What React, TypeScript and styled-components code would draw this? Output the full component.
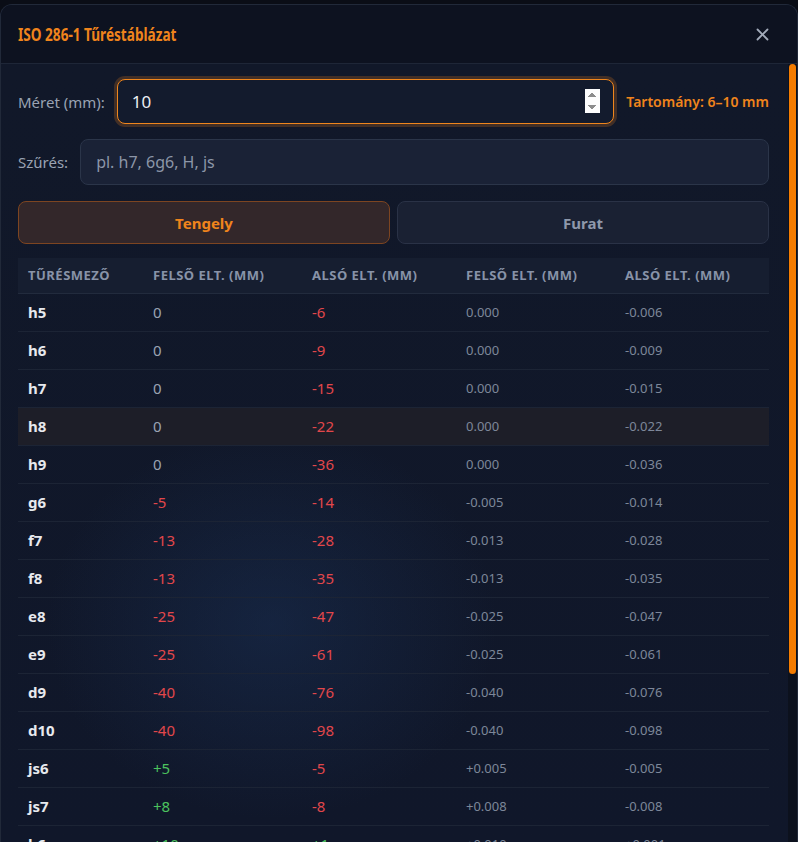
import React, { useState } from 'react';
import styled, { createGlobalStyle } from 'styled-components';

type Row = { name: string; es: number; ei: number };

const SHAFT_ROWS: Row[] = [
  { name: 'h5', es: 0, ei: -6 },
  { name: 'h6', es: 0, ei: -9 },
  { name: 'h7', es: 0, ei: -15 },
  { name: 'h8', es: 0, ei: -22 },
  { name: 'h9', es: 0, ei: -36 },
  { name: 'g6', es: -5, ei: -14 },
  { name: 'f7', es: -13, ei: -28 },
  { name: 'f8', es: -13, ei: -35 },
  { name: 'e8', es: -25, ei: -47 },
  { name: 'e9', es: -25, ei: -61 },
  { name: 'd9', es: -40, ei: -76 },
  { name: 'd10', es: -40, ei: -98 },
  { name: 'js6', es: 5, ei: -5 },
  { name: 'js7', es: 8, ei: -8 },
  { name: 'k6', es: 10, ei: 1 },
  { name: 'm6', es: 15, ei: 6 },
  { name: 'n6', es: 19, ei: 10 },
  { name: 'p6', es: 24, ei: 15 },
  { name: 'r6', es: 28, ei: 19 },
  { name: 's6', es: 32, ei: 23 },
];

const fmtUm = (v: number) => (v > 0 ? `+${v}` : `${v}`);
const fmtMm = (v: number) => {
  const s = (Math.abs(v) / 1000).toFixed(3);
  if (v > 0) return `+${s}`;
  if (v < 0) return `-${s}`;
  return s;
};
const tone = (v: number) => (v > 0 ? 'pos' : v < 0 ? 'neg' : 'zero');

const GlobalStyle = createGlobalStyle`
  html, body {
    margin: 0;
    background: #0a0d16;
    height: 100%;
  }
  body {
    font-family: "Noto Sans", "Open Sans", sans-serif;
    color: #e5e7eb;
    overflow: hidden;
  }
  * { box-sizing: border-box; }
`;

const Modal = styled.div`
  position: relative;
  margin-top: 4px;
  height: calc(100vh - 4px);
  width: 100%;
  display: flex;
  flex-direction: column;
  border: 1px solid #212939;
  border-bottom: none;
  border-radius: 12px 12px 0 0;
  background: #10172a;
  overflow: hidden;
`;

const Header = styled.div`
  flex: 0 0 59px;
  display: flex;
  align-items: center;
  justify-content: space-between;
  padding: 0 22px 0 17px;
  background: #0d1220;
  border-bottom: 1px solid #1e2637;
`;

const Title = styled.h2`
  margin: 0;
  font-family: "Noto Sans", "DejaVu Sans", sans-serif;
  font-stretch: 62.5%;
  font-weight: 700;
  font-size: 17px;
  color: #f0841c;
  transform: scaleX(0.8);
  transform-origin: left center;
`;

const CloseButton = styled.button`
  border: none;
  background: transparent;
  padding: 6px;
  display: flex;
  cursor: pointer;
  color: #a2abba;
`;

const Body = styled.div`
  flex: 1;
  overflow-y: auto;
  scrollbar-width: none;
  padding: 15px 28px 10px 17px;
  background:
    radial-gradient(ellipse 300px 260px at 34% 72%, rgba(30, 58, 102, 0.36), transparent 75%),
    linear-gradient(180deg, #111829 0%, #10172a 100%);
`;

/* scroll indicator drawn over the right edge of the body */
const ScrollTrack = styled.div`
  position: absolute;
  top: 59px;
  right: 0;
  bottom: 0;
  width: 9px;
  background: #0c111d;
  pointer-events: none;
`;

const ScrollThumb = styled.div`
  position: absolute;
  top: 0;
  right: 1px;
  width: 7px;
  height: 610px;
  border-radius: 4px;
  background: #f57c00;
`;

const FieldRow = styled.div<{ $gap?: number }>`
  display: flex;
  align-items: center;
  gap: 12px;
  margin-bottom: ${(p) => p.$gap ?? 15}px;
`;

const Label = styled.label`
  font-size: 15px;
  color: #9aa3b3;
  white-space: nowrap;
`;

const NumberInput = styled.input`
  flex: 1;
  height: 45px;
  padding: 0 13px 0 14px;
  border-radius: 8px;
  border: 1px solid #ef861d;
  box-shadow: 0 0 0 3px rgba(240, 132, 28, 0.22);
  background: #131b2d;
  color: #eceef2;
  font-family: inherit;
  font-size: 17px;
  outline: none;

  &::-webkit-inner-spin-button {
    opacity: 1;
    height: 25px;
  }
`;

const FilterInput = styled.input`
  flex: 1;
  height: 46px;
  padding: 0 15px;
  border-radius: 8px;
  border: 1px solid #2b3549;
  background: #1a2236;
  color: #e5e7eb;
  font-family: inherit;
  font-size: 16px;
  outline: none;

  &::placeholder {
    color: #8c96a8;
  }
`;

const RangeNote = styled.span`
  font-size: 14px;
  font-weight: 600;
  color: #f0841c;
  white-space: nowrap;
`;

const Tabs = styled.div`
  display: grid;
  grid-template-columns: 1fr 1fr;
  gap: 7px;
  margin-bottom: 14px;
`;

const Tab = styled.button<{ $active: boolean }>`
  height: 43px;
  border-radius: 8px;
  font-family: inherit;
  font-size: 15px;
  font-weight: 700;
  cursor: pointer;
  border: 1px solid ${(p) => (p.$active ? '#7d4521' : '#2a3246')};
  background: ${(p) => (p.$active ? '#33272a' : '#1a2133')};
  color: ${(p) => (p.$active ? '#f0841c' : '#8e98ab')};
`;

const Table = styled.table`
  width: 100%;
  border-collapse: collapse;
  table-layout: fixed;
`;

const HeadCell = styled.th<{ $w: number }>`
  width: ${(p) => p.$w}px;
  height: 35px;
  padding: 0 10px;
  text-align: left;
  font-size: 13px;
  font-weight: 700;
  letter-spacing: 0.5px;
  text-transform: uppercase;
  color: #8893a8;
  background: #161e30;
  border-bottom: 1px solid #222b3d;
  white-space: nowrap;
`;

const BodyRow = styled.tr<{ $hover?: boolean }>`
  height: 38px;
  border-bottom: 1px solid #1c2435;
  background: ${(p) => (p.$hover ? '#1d1e28' : 'transparent')};
`;

const NameCell = styled.td`
  padding: 0 10px;
  font-size: 15px;
  font-weight: 700;
  color: #e7e9ee;
`;

const UmCell = styled.td<{ $tone: string }>`
  padding: 0 10px;
  font-size: 15px;
  color: ${(p) => (p.$tone === 'neg' ? '#e2474b' : p.$tone === 'pos' ? '#4cc35e' : '#9aa3b3')};
`;

const MmCell = styled.td`
  padding: 0 10px;
  font-size: 13px;
  color: #7d8799;
`;

const CloseIcon = () => (
  <svg width="13" height="13" viewBox="0 0 13 13" fill="none" stroke="currentColor" strokeWidth="1.8" strokeLinecap="round">
    <line x1="1.5" y1="1.5" x2="11.5" y2="11.5" />
    <line x1="11.5" y1="1.5" x2="1.5" y2="11.5" />
  </svg>
);

const COLUMNS = [
  { label: 'Tűrésmező', w: 125 },
  { label: 'Felső elt. (mm)', w: 159 },
  { label: 'Alsó elt. (mm)', w: 154 },
  { label: 'Felső elt. (mm)', w: 159 },
  { label: 'Alsó elt. (mm)', w: 154 },
];

export default function App() {
  const [size, setSize] = useState('10');
  const [filter, setFilter] = useState('');
  const [mode, setMode] = useState<'shaft' | 'hole'>('shaft');

  const rows = SHAFT_ROWS.filter((r) => r.name.toLowerCase().includes(filter.trim().toLowerCase()));

  return (
    <>
      <GlobalStyle />
      <Modal>
        <Header>
          <Title>ISO 286-1 Tűréstáblázat</Title>
          <CloseButton aria-label="Bezárás">
            <CloseIcon />
          </CloseButton>
        </Header>
        <Body>
          <FieldRow>
            <Label>Méret (mm):</Label>
            <NumberInput type="number" value={size} onChange={(e) => setSize(e.target.value)} />
            <RangeNote>Tartomány: 6–10 mm</RangeNote>
          </FieldRow>
          <FieldRow $gap={16}>
            <Label>Szűrés:</Label>
            <FilterInput
              placeholder="pl. h7, 6g6, H, js"
              value={filter}
              onChange={(e) => setFilter(e.target.value)}
            />
          </FieldRow>
          <Tabs>
            <Tab $active={mode === 'shaft'} onClick={() => setMode('shaft')}>Tengely</Tab>
            <Tab $active={mode === 'hole'} onClick={() => setMode('hole')}>Furat</Tab>
          </Tabs>
          <Table>
            <thead>
              <tr>
                {COLUMNS.map((c, i) => (
                  <HeadCell key={i} $w={c.w}>{c.label}</HeadCell>
                ))}
              </tr>
            </thead>
            <tbody>
              {rows.map((r) => (
                <BodyRow key={r.name} $hover={r.name === 'h8'}>
                  <NameCell>{r.name}</NameCell>
                  <UmCell $tone={tone(r.es)}>{fmtUm(r.es)}</UmCell>
                  <UmCell $tone={tone(r.ei)}>{fmtUm(r.ei)}</UmCell>
                  <MmCell>{fmtMm(r.es)}</MmCell>
                  <MmCell>{fmtMm(r.ei)}</MmCell>
                </BodyRow>
              ))}
            </tbody>
          </Table>
        </Body>
        <ScrollTrack>
          <ScrollThumb />
        </ScrollTrack>
      </Modal>
    </>
  );
}
